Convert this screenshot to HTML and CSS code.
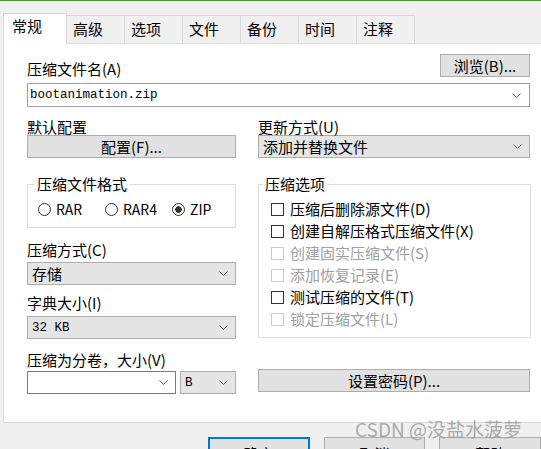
FILE: index.html
```html
<!DOCTYPE html>
<html lang="zh-CN">
<head>
<meta charset="utf-8">
<title>压缩文件名和参数</title>
<link rel="stylesheet" href="styles.css">
</head>
<body>
<div class="tabs">
  <div class="tab active">常规</div>
  <div class="tab">高级</div>
  <div class="tab">选项</div>
  <div class="tab">文件</div>
  <div class="tab">备份</div>
  <div class="tab">时间</div>
  <div class="tab">注释</div>
</div>
<div class="panel">
  <div class="content">
    <div class="row-top">
      <span class="label">压缩文件名(A)</span>
      <div class="btn btn-browse">浏览(B)...</div>
    </div>
    <div class="combo combo-file">
      <span class="mono">bootanimation.zip</span>
      <svg class="chev" viewBox="0 0 9 5" width="9" height="5"><polyline points="0.5,0.5 4.5,4.5 8.5,0.5"/></svg>
    </div>
    <div class="columns">
      <div class="col col-left">
        <div class="label label-r2">默认配置</div>
        <div class="btn btn-block">配置(F)...</div>
        <fieldset class="group group-format">
          <legend>压缩文件格式</legend>
          <div class="radios">
            <span class="radio-item"><span class="radio"></span>RAR</span>
            <span class="radio-item"><span class="radio"></span>RAR4</span>
            <span class="radio-item"><span class="radio checked"></span>ZIP</span>
          </div>
        </fieldset>
        <div class="label label-method">压缩方式(C)</div>
        <div class="select select-method">
          <span>存储</span>
          <svg class="chev" viewBox="0 0 9 5" width="9" height="5"><polyline points="0.5,0.5 4.5,4.5 8.5,0.5"/></svg>
        </div>
        <div class="label label-dict">字典大小(I)</div>
        <div class="select select-dict">
          <span class="mono">32 KB</span>
          <svg class="chev" viewBox="0 0 9 5" width="9" height="5"><polyline points="0.5,0.5 4.5,4.5 8.5,0.5"/></svg>
        </div>
        <div class="label label-split">压缩为分卷，大小(V)</div>
        <div class="split-row">
          <div class="combo combo-split">
            <span></span>
            <svg class="chev" viewBox="0 0 9 5" width="9" height="5"><polyline points="0.5,0.5 4.5,4.5 8.5,0.5"/></svg>
          </div>
          <div class="select select-unit">
            <span class="mono">B</span>
            <svg class="chev" viewBox="0 0 9 5" width="9" height="5"><polyline points="0.5,0.5 4.5,4.5 8.5,0.5"/></svg>
          </div>
        </div>
      </div>
      <div class="col col-right">
        <div class="label label-r2">更新方式(U)</div>
        <div class="select select-update">
          <span>添加并替换文件</span>
          <svg class="chev" viewBox="0 0 9 5" width="9" height="5"><polyline points="0.5,0.5 4.5,4.5 8.5,0.5"/></svg>
        </div>
        <fieldset class="group group-options">
          <legend>压缩选项</legend>
          <div class="check-item"><span class="checkbox"></span>压缩后删除源文件(D)</div>
          <div class="check-item"><span class="checkbox"></span>创建自解压格式压缩文件(X)</div>
          <div class="check-item disabled"><span class="checkbox"></span>创建固实压缩文件(S)</div>
          <div class="check-item disabled"><span class="checkbox"></span>添加恢复记录(E)</div>
          <div class="check-item"><span class="checkbox"></span>测试压缩的文件(T)</div>
          <div class="check-item disabled"><span class="checkbox"></span>锁定压缩文件(L)</div>
        </fieldset>
        <div class="btn btn-block btn-password">设置密码(P)...</div>
      </div>
    </div>
  </div>
</div>
<div class="dialog-buttons">
  <div class="dbtn primary">确定</div>
  <div class="dbtn">取消</div>
  <div class="dbtn">帮助</div>
</div>
<div class="watermark">CSDN @没盐水菠萝</div>
</body>
</html>
```
FILE: styles.css
```css
html, body {
  margin: 0;
  padding: 0;
}
body {
  position: relative;
  width: 541px;
  height: 449px;
  box-sizing: border-box;
  overflow: hidden;
  background: #f0f0f0;
  border-top: 1px solid #4a9a2c;
  font-family: "Noto Sans CJK SC", "Noto Sans", sans-serif;
  font-size: 15px;
  color: #000;
}
.tabs {
  display: flex;
  align-items: flex-end;
  margin-top: 12px;
  padding-left: 3px;
}
.tab {
  height: 28px;
  box-sizing: border-box;
  padding: 3px 21px 0 6px;
  line-height: 20px;
  border-top: 1px solid #d9d9d9;
  border-right: 1px solid #d9d9d9;
  background: #f0f0f0;
  white-space: nowrap;
}
.tab.active {
  position: relative;
  z-index: 1;
  height: 31px;
  margin-bottom: -1px;
  padding: 2px 24px 0 8px;
  background: #fff;
  border-left: 1px solid #d9d9d9;
}
.panel {
  margin-left: 3px;
  margin-right: -10px;
  background: #fff;
  border: 1px solid #d9d9d9;
  padding: 10px 0 28px 23px;
}
.content {
  width: 503px;
}
.label {
  line-height: 16px;
  white-space: nowrap;
}
.row-top {
  display: flex;
  justify-content: space-between;
  align-items: flex-end;
}
.btn {
  box-sizing: border-box;
  height: 23px;
  border: 1px solid #adadad;
  background: #e1e1e1;
  display: flex;
  align-items: center;
  justify-content: center;
  line-height: 16px;
  white-space: nowrap;
}
.btn-browse {
  width: 90px;
}
.mono {
  font-family: "Liberation Mono", monospace;
  font-size: 12.5px;
}
.chev {
  flex: none;
  fill: none;
  stroke: #606060;
  stroke-width: 1;
}
.combo, .select {
  box-sizing: border-box;
  height: 23px;
  display: flex;
  align-items: center;
  justify-content: space-between;
  padding: 0 7px 0 4px;
  white-space: nowrap;
}
.combo {
  background: #fff;
  border: 1px solid #7a7a7a;
}
.select {
  background: #e5e5e5;
  border: 1px solid #adadad;
}
.combo-file {
  margin-top: 6px;
  height: 24px;
  padding-left: 2px;
  padding-right: 8px;
  border-color: #a0a0a0;
}
.columns {
  display: flex;
  gap: 22px;
}
.col-left {
  width: 209px;
  flex: none;
}
.col-right {
  width: 272px;
  flex: none;
}
.label-r2 {
  margin-top: 12px;
}
.group {
  box-sizing: border-box;
  margin: 18px 0 0;
  border: 1px solid #dcdcdc;
  min-inline-size: 0;
}
.group legend {
  line-height: 16px;
  padding: 0 2px;
}
.group-format {
  width: 209px;
  padding: 8px 0 9px 10px;
}
.group-format legend {
  margin-left: -3px;
}
.radios {
  display: flex;
  height: 18px;
  align-items: center;
}
.radio-item {
  width: 67px;
  flex: none;
  display: flex;
  align-items: center;
  gap: 5px;
  font-size: 14px;
  line-height: 16px;
}
.radio {
  width: 13px;
  height: 13px;
  box-sizing: border-box;
  border: 1px solid #333;
  border-radius: 50%;
  background: #fff;
}
.radio.checked {
  background: radial-gradient(circle, #333 0, #333 3px, #fff 3.6px);
}
.group-options {
  width: 273px;
  padding: 6px 0 7px 12px;
}
.group-options legend {
  margin-left: -8px;
}
.check-item {
  height: 22px;
  display: flex;
  align-items: center;
  gap: 6px;
  line-height: 16px;
  white-space: nowrap;
}
.checkbox {
  width: 13px;
  height: 13px;
  box-sizing: border-box;
  border: 1px solid #333;
  background: #fff;
}
.check-item.disabled {
  color: #a0a0a0;
}
.check-item.disabled .checkbox {
  border-color: #cccccc;
}
.label-method {
  margin-top: 14px;
}
.select-method {
  margin-top: 4px;
}
.label-dict {
  margin-top: 10px;
}
.select-dict {
  margin-top: 5px;
}
.label-split {
  margin-top: 13px;
}
.split-row {
  margin-top: 3px;
  display: flex;
  gap: 4px;
}
.combo-split {
  width: 149px;
}
.select-unit {
  width: 56px;
}
.btn-password {
  margin-top: 31px;
}
.dialog-buttons {
  display: flex;
  gap: 14px;
  padding-left: 208px;
  margin-top: 14px;
}
.dbtn {
  width: 105px;
  height: 30px;
  box-sizing: border-box;
  border: 1px solid #adadad;
  background: #e1e1e1;
  text-align: center;
  padding-top: 8px;
  line-height: 16px;
}
.dbtn.primary {
  border: 2px solid #0078d7;
  padding-top: 7px;
}
.watermark {
  position: absolute;
  left: 355px;
  top: 416px;
  font-size: 19px;
  line-height: 24px;
  color: rgba(150, 150, 150, 0.8);
  white-space: nowrap;
}
```
